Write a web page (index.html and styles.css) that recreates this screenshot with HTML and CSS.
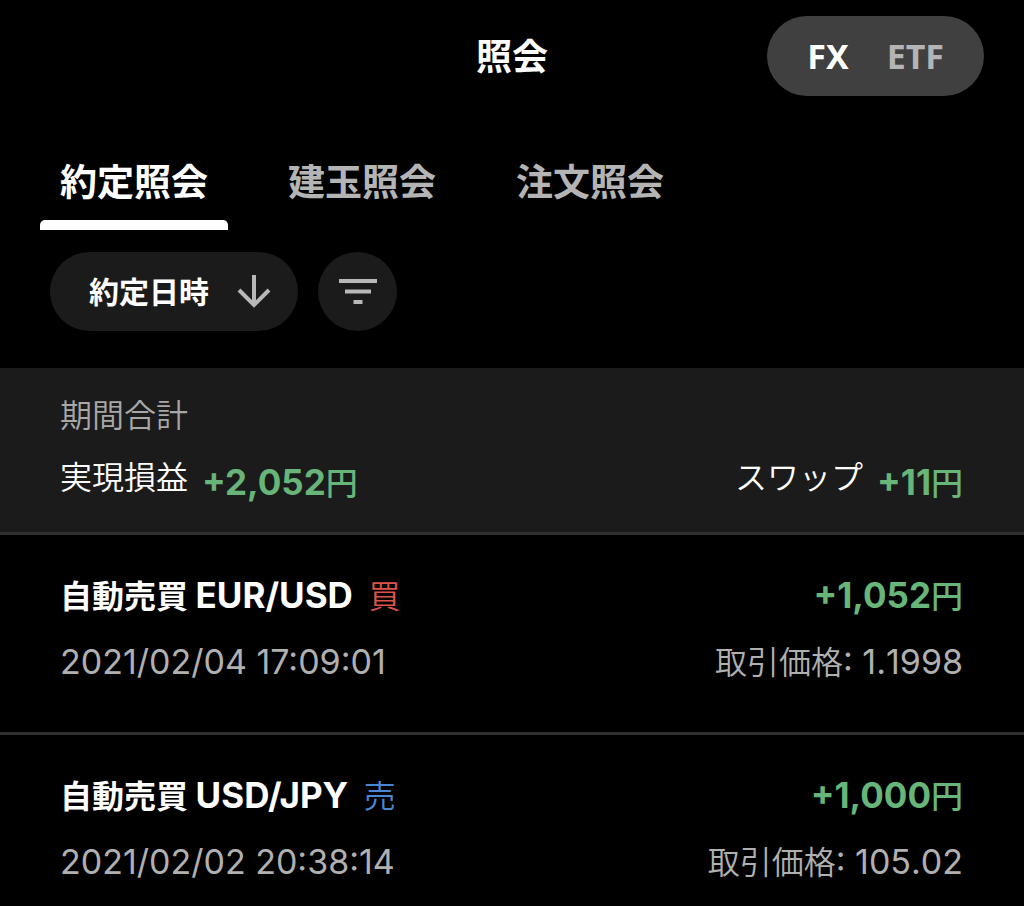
FILE: index.html
```html
<!DOCTYPE html>
<html lang="ja">
<head>
<meta charset="utf-8">
<meta name="viewport" content="width=device-width, initial-scale=1">
<title>照会</title>
<link rel="stylesheet" href="styles.css">
</head>
<body>
<header class="header">
  <h1 class="title">照会</h1>
  <div class="switch">
    <button type="button" class="switch-item active" aria-pressed="true">FX</button>
    <button type="button" class="switch-item" aria-pressed="false">ETF</button>
  </div>
</header>
<nav class="tabs">
  <a href="#executions" class="tab active" aria-current="page">約定照会</a>
  <a href="#positions" class="tab">建玉照会</a>
  <a href="#orders" class="tab">注文照会</a>
</nav>
<div class="filters">
  <button type="button" class="sort">約定日時
    <svg class="arrow" viewBox="0 0 34 34" aria-hidden="true"><path d="M17 0v30M2 15l15 15 15-15"/></svg>
  </button>
  <button type="button" class="filter" aria-label="絞り込み">
    <svg class="lines" viewBox="0 0 38 26" aria-hidden="true"><path d="M0 2h38M6 12.500h26M14.500 23h9"/></svg>
  </button>
</div>
<main>
  <section class="summary">
    <h2 class="caption">期間合計</h2>
    <div class="row">
      <div class="pair"><span>実現損益</span><strong class="amount">+2,052<span class="yen">円</span></strong></div>
      <div class="pair"><span>スワップ</span><strong class="amount">+11<span class="yen">円</span></strong></div>
    </div>
  </section>
  <article class="trade">
    <div class="row">
      <h2 class="name">自動売買 <span class="code">EUR/USD</span> <span class="side buy">買</span></h2>
      <strong class="amount">+1,052<span class="yen">円</span></strong>
    </div>
    <div class="row detail"><time class="num">2021/02/04 17:09:01</time><span>取引価格<span class="num price">: 1.1998</span></span></div>
  </article>
  <article class="trade">
    <div class="row">
      <h2 class="name">自動売買 <span class="code">USD/JPY</span> <span class="side sell">売</span></h2>
      <strong class="amount">+1,000<span class="yen">円</span></strong>
    </div>
    <div class="row detail"><time class="num">2021/02/02 20:38:14</time><span>取引価格<span class="num price">: 105.02</span></span></div>
  </article>
</main>
</body>
</html>
```
FILE: styles.css
```css
* { box-sizing: border-box; }
body {
  margin: 0;
  background: #000;
  color: #fff;
  font-family: Inter, "Noto Sans CJK JP", sans-serif;
  font-size: 32px;
  line-height: 48px;
  overflow-x: hidden;
}
h1, h2 { margin: 0; font-size: inherit; }
button { border: 0; padding: 0; font: inherit; color: inherit; cursor: pointer; }
.header {
  display: grid;
  grid-template-columns: 1fr auto 1fr;
  align-items: center;
  padding: 16px 40px 0;
}
.title { grid-column: 2; padding-top: 2px; font-size: 36px; font-weight: 700; }
.switch {
  justify-self: end;
  display: flex;
  gap: 38px;
  height: 80px;
  padding: 0 40px;
  border-radius: 40px;
  background: #404040;
}
.switch-item {
  background: none;
  font-family: "Noto Sans", sans-serif;
  font-size: 34px;
  font-weight: 700;
  color: #b4b4b4;
}
.switch-item.active { color: #fff; }
.tabs { display: flex; gap: 40px; padding: 56px 40px 0; }
.tab {
  height: 78px;
  padding: 5px 20px 0;
  font-size: 37px;
  font-weight: 700;
  line-height: 52px;
  color: #b4b4b4;
  text-decoration: none;
  position: relative;
}
.tab.active { color: #fff; }
.tab.active::after {
  content: "";
  position: absolute;
  inset: auto 0 0;
  height: 10px;
  border-radius: 5px 5px 0 0;
  background: #fff;
}
.filters { display: flex; gap: 20px; padding: 22px 50px 37px; }
.sort, .filter {
  display: flex;
  align-items: center;
  justify-content: center;
  height: 79px;
  border-radius: 40px;
  background: #1b1b1b;
}
.sort { gap: 28px; padding: 0 27px 0 39px; font-size: 30px; font-weight: 700; }
.filter { width: 79px; }
.arrow { width: 34px; height: 34px; fill: none; stroke: #b8b8b8; stroke-width: 4; }
.lines { width: 38px; height: 26px; fill: none; stroke: #b8b8b8; stroke-width: 4; }
.row { display: flex; justify-content: space-between; align-items: baseline; }
.summary { padding: 24px 61px 26px 60px; background: #1b1b1b; font-weight: 350; }
.caption { font-weight: 350; color: #a8a8a8; }
.summary .row { margin-top: 14px; }
.pair { display: flex; gap: 14px; }
.pair .amount { padding-top: 4px; }
.amount { font-size: 35px; font-weight: 700; color: #67b579; }
.yen { font-size: 32px; font-weight: 500; }
.yen, .code, .num { line-height: 1; }
.trade { border-top: 3px solid #303030; padding: 36px 61px 45px 60px; }
.name { font-weight: 700; }
.code { font-size: 35px; }
.side { margin-left: 8px; font-weight: 350; }
.buy { color: #dc5347; }
.sell { color: #4a86d4; }
.detail { margin-top: 18px; font-weight: 350; color: #b0b0b0; }
.num { font-size: 34px; font-weight: 400; }
.price { font-kerning: none; }
```
